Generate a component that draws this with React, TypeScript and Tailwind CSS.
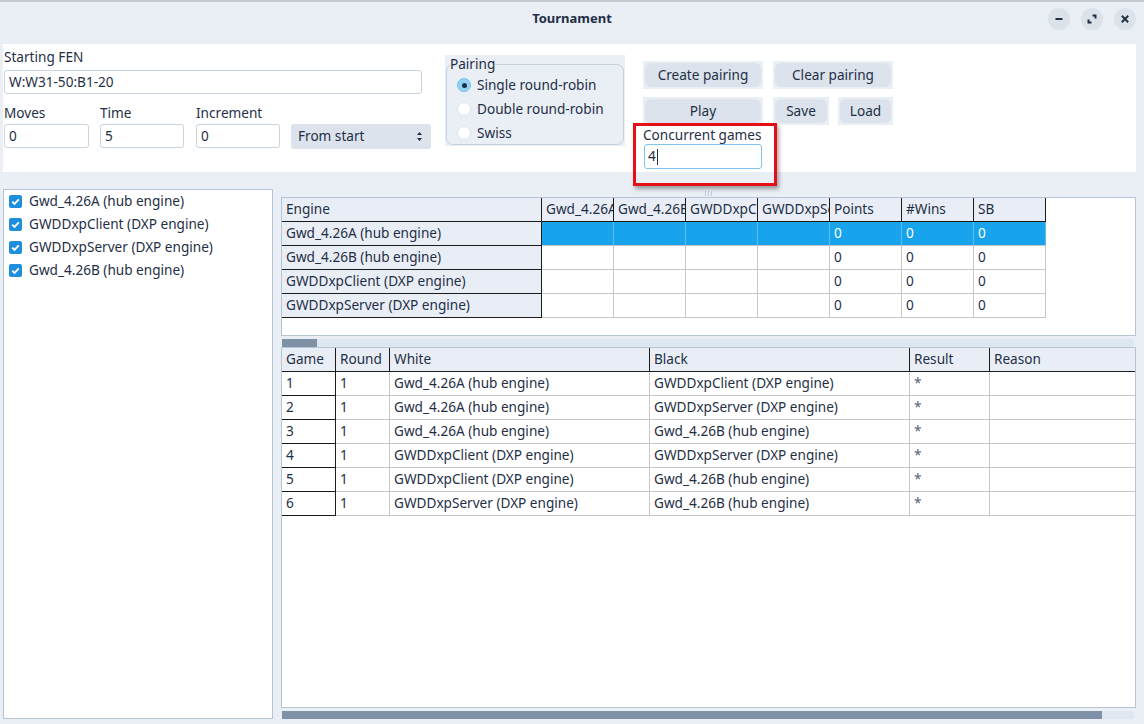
import React from 'react'

const engines = ['Gwd_4.26A (hub engine)', 'Gwd_4.26B (hub engine)', 'GWDDxpClient (DXP engine)', 'GWDDxpServer (DXP engine)']
const checked = ['Gwd_4.26A (hub engine)', 'GWDDxpClient (DXP engine)', 'GWDDxpServer (DXP engine)', 'Gwd_4.26B (hub engine)']
const crossCols = ['Gwd_4.26A', 'Gwd_4.26B', 'GWDDxpClient', 'GWDDxpServer']
const scoreCols = ['Points', '#Wins', 'SB']

const games = [
  ['1', '1', 'Gwd_4.26A (hub engine)', 'GWDDxpClient (DXP engine)'],
  ['2', '1', 'Gwd_4.26A (hub engine)', 'GWDDxpServer (DXP engine)'],
  ['3', '1', 'Gwd_4.26A (hub engine)', 'Gwd_4.26B (hub engine)'],
  ['4', '1', 'GWDDxpClient (DXP engine)', 'GWDDxpServer (DXP engine)'],
  ['5', '1', 'GWDDxpClient (DXP engine)', 'Gwd_4.26B (hub engine)'],
  ['6', '1', 'GWDDxpServer (DXP engine)', 'Gwd_4.26B (hub engine)'],
]

const hdr = 'h-[24px] shrink-0 bg-[#e9eef6] border-b border-r border-[#1b1b1b] pl-[4px] leading-[21px] overflow-hidden whitespace-nowrap'
const cell = 'h-[24px] shrink-0 border-b border-r border-[#c6c6c6] pl-[4px] leading-[21px] overflow-hidden whitespace-nowrap'
const inputCls = 'h-[24px] border border-[#c9d4e1] rounded-[3px] px-[4px] flex items-center bg-white'

function Btn({ w, label }: { w: string; label: string }) {
  return (
    <div className={`${w} h-[28px] bg-[#eaeef5] p-[2px]`}>
      <div className="w-full h-full rounded-[6px] bg-[#dce3ec] flex items-center justify-center">{label}</div>
    </div>
  )
}

function Radio({ on, label }: { on?: boolean; label: string }) {
  return (
    <div className="h-[24px] flex items-center pl-[7px]">
      {on ? (
        <span className="w-[14px] h-[14px] rounded-full bg-[#94d2f5] border border-[#74c2ee] flex items-center justify-center">
          <span className="w-[5px] h-[5px] rounded-full bg-[#1f2f46]" />
        </span>
      ) : (
        <span className="w-[14px] h-[14px] rounded-full bg-white border border-[#dde4ec]" />
      )}
      <span className="ml-[6px]">{label}</span>
    </div>
  )
}

function Scrollbar({ handle }: { handle: string }) {
  return (
    <div className="mt-[3px] ml-[1px] mr-[2px] h-[8px] bg-[#dfe7f1] rounded-r-[4px] flex">
      <div className={`${handle} h-full bg-[#7f91a7]`} />
    </div>
  )
}

export default function App() {
  return (
    <div className="w-[1144px] h-[724px] overflow-hidden bg-[#eaeef5] text-[13.6px] text-[#1f2f46] font-['Noto_Sans','DejaVu_Sans',sans-serif] relative flex flex-col">
      <div className="h-[2px] bg-[#c3c9d1] shrink-0" />

      {/* title bar */}
      <div className="h-[34px] shrink-0 grid grid-cols-[1fr_auto_1fr] items-center">
        <div />
        <div className="font-bold text-[13px]">Tournament</div>
        <div className="flex justify-end gap-[11px] pr-[8px]">
          <span className="w-[22px] h-[22px] rounded-full bg-[#dce2ea] flex items-center justify-center">
            <svg width="10" height="10" viewBox="0 0 10 10"><path d="M1.5 5h7" stroke="#1f2f46" strokeWidth="2" /></svg>
          </span>
          <span className="w-[22px] h-[22px] rounded-full bg-[#dce2ea] flex items-center justify-center">
            <svg width="10" height="10" viewBox="0 0 10 10" fill="none"><path d="M5.5 1.5h3v3M1.5 5.5v3h3" stroke="#1f2f46" strokeWidth="2" /></svg>
          </span>
          <span className="w-[22px] h-[22px] rounded-full bg-[#dce2ea] flex items-center justify-center">
            <svg width="10" height="10" viewBox="0 0 10 10"><path d="M1.8 1.8l6.4 6.4M8.2 1.8l-6.4 6.4" stroke="#1f2f46" strokeWidth="2" /></svg>
          </span>
        </div>
      </div>

      {/* settings panel */}
      <div className="mt-[8px] ml-[3px] mr-[8px] h-[128px] shrink-0 bg-white flex">
        <div className="pl-[1px] pt-[4px] w-[428px]">
          <div className="leading-[18px]">Starting FEN</div>
          <div className={`${inputCls} mt-[4px] w-[418px]`}>W:W31-50:B1-20</div>
          <div className="mt-[10px] flex">
            <div className="w-[85px]">
              <div className="leading-[18px]">Moves</div>
              <div className={`${inputCls} mt-[2px]`}>0</div>
            </div>
            <div className="w-[84px] ml-[11px]">
              <div className="leading-[18px]">Time</div>
              <div className={`${inputCls} mt-[2px]`}>5</div>
            </div>
            <div className="w-[84px] ml-[12px]">
              <div className="leading-[18px]">Increment</div>
              <div className={`${inputCls} mt-[2px]`}>0</div>
            </div>
            <div className="w-[140px] ml-[11px] mt-[20px] h-[25px] bg-[#dce3ec] rounded-[3px] flex items-center justify-between pl-[7px] pr-[8px]">
              <span>From start</span>
              <svg width="7" height="11" viewBox="0 0 7 11"><path d="M3.5 1L6 4H1zM3.5 10L1 7h5z" fill="#1f2f46" /></svg>
            </div>
          </div>
        </div>

        <div className="ml-[14px] mt-[11px] w-[180px] h-[91px] bg-[#eaeef5]">
          <fieldset className="ml-[1px] w-[178px] h-[90px] border border-[#c6d1de] rounded-[7px] px-[3px]">
            <legend className="leading-[18px]">Pairing</legend>
            <Radio on label="Single round-robin" />
            <Radio label="Double round-robin" />
            <Radio label="Swiss" />
          </fieldset>
        </div>

        <div className="ml-[18px] mt-[17px]">
          <div className="flex gap-[10px]">
            <Btn w="w-[120px]" label="Create pairing" />
            <Btn w="w-[120px]" label="Clear pairing" />
          </div>
          <div className="flex mt-[8px]">
            <Btn w="w-[120px]" label="Play" />
            <div className="ml-[10px]"><Btn w="w-[56px]" label="Save" /></div>
            <div className="ml-[9px]"><Btn w="w-[55px]" label="Load" /></div>
          </div>
          <div className="mt-[1px] leading-[18px]">Concurrent games</div>
          <div className="ml-[1px] w-[118px] h-[25px] border-[1.5px] border-[#7fc4ee] rounded-[3px] px-[3px] flex items-center">
            <span>4</span>
            <span className="ml-[1px] w-[1px] h-[16px] bg-[#1f2f46]" />
          </div>
        </div>
      </div>

      {/* lower area */}
      <div className="mt-[17px] ml-[3px] mr-[8px] h-[530px] shrink-0 flex">
        <div className="w-[270px] h-full border border-[#b6c4d4] bg-white pl-[5px]">
          {checked.map(n => (
            <div key={n} className="h-[23px] flex items-center">
              <span className="w-[13px] h-[13px] rounded-[2px] bg-[#1e8fdc] flex items-center justify-center">
                <svg width="11" height="11" viewBox="0 0 11 11" fill="none"><path d="M2.2 5.6l2.3 2.3 4.3-4.6" stroke="white" strokeWidth="1.8" /></svg>
              </span>
              <span className="ml-[7px]">{n}</span>
            </div>
          ))}
        </div>

        <div className="ml-[8px] flex-1 flex flex-col">
          <div className="h-[8px] flex items-center justify-center gap-[2px]">
            <span className="w-[1px] h-[5px] bg-[#c2cad4]" />
            <span className="w-[1px] h-[5px] bg-[#c2cad4]" />
            <span className="w-[1px] h-[5px] bg-[#c2cad4]" />
          </div>

          {/* standings */}
          <div className="h-[139px] border border-[#b6c4d4] bg-white overflow-hidden">
            <div className="flex">
              <div className={`${hdr} w-[260px] pl-[3px]`}>Engine</div>
              {crossCols.concat(scoreCols).map(c => (
                <div key={c} className={`${hdr} w-[72px]`}>{c}</div>
              ))}
            </div>
            {engines.map((e, i) => (
              <div key={e} className="flex">
                <div className={`${hdr} w-[260px] pl-[3px]`}>{e}</div>
                {crossCols.map(c => (
                  <div key={c} className={`${cell} w-[72px] ${i === 0 ? 'bg-[#17a4ec] border-r-[#5fbdf0] border-b-[#c6c6c6]' : ''}`} />
                ))}
                {scoreCols.map(c => (
                  <div key={c} className={`${cell} w-[72px] ${i === 0 ? 'bg-[#17a4ec] text-white border-r-[#5fbdf0]' : ''}`}>0</div>
                ))}
              </div>
            ))}
          </div>
          <Scrollbar handle="w-[35px]" />

          {/* games */}
          <div className="h-[361px] border border-[#b6c4d4] bg-white overflow-hidden">
            <div className="flex">
              <div className={`${hdr} w-[54px]`}>Game</div>
              <div className={`${hdr} w-[54px]`}>Round</div>
              <div className={`${hdr} w-[260px]`}>White</div>
              <div className={`${hdr} w-[260px]`}>Black</div>
              <div className={`${hdr} w-[80px]`}>Result</div>
              <div className={`${hdr} flex-1 border-r-0`}>Reason</div>
            </div>
            {games.map(g => (
              <div key={g[0]} className="flex">
                <div className={`${cell} w-[54px] border-r-[#1b1b1b] border-b-[#1b1b1b]`}>{g[0]}</div>
                <div className={`${cell} w-[54px]`}>{g[1]}</div>
                <div className={`${cell} w-[260px]`}>{g[2]}</div>
                <div className={`${cell} w-[260px]`}>{g[3]}</div>
                <div className={`${cell} w-[80px] text-[#55657a]`}>*</div>
                <div className={`${cell} flex-1 border-r-0`} />
              </div>
            ))}
          </div>
          <Scrollbar handle="w-[820px]" />
        </div>
      </div>

      {/* highlight box */}
      <div className="absolute left-[633px] top-[123px] w-[144px] h-[63px] border-[3px] border-[#e60f17] shadow-[2px_3px_4px_rgba(0,0,0,0.35)] pointer-events-none" />
    </div>
  )
}
